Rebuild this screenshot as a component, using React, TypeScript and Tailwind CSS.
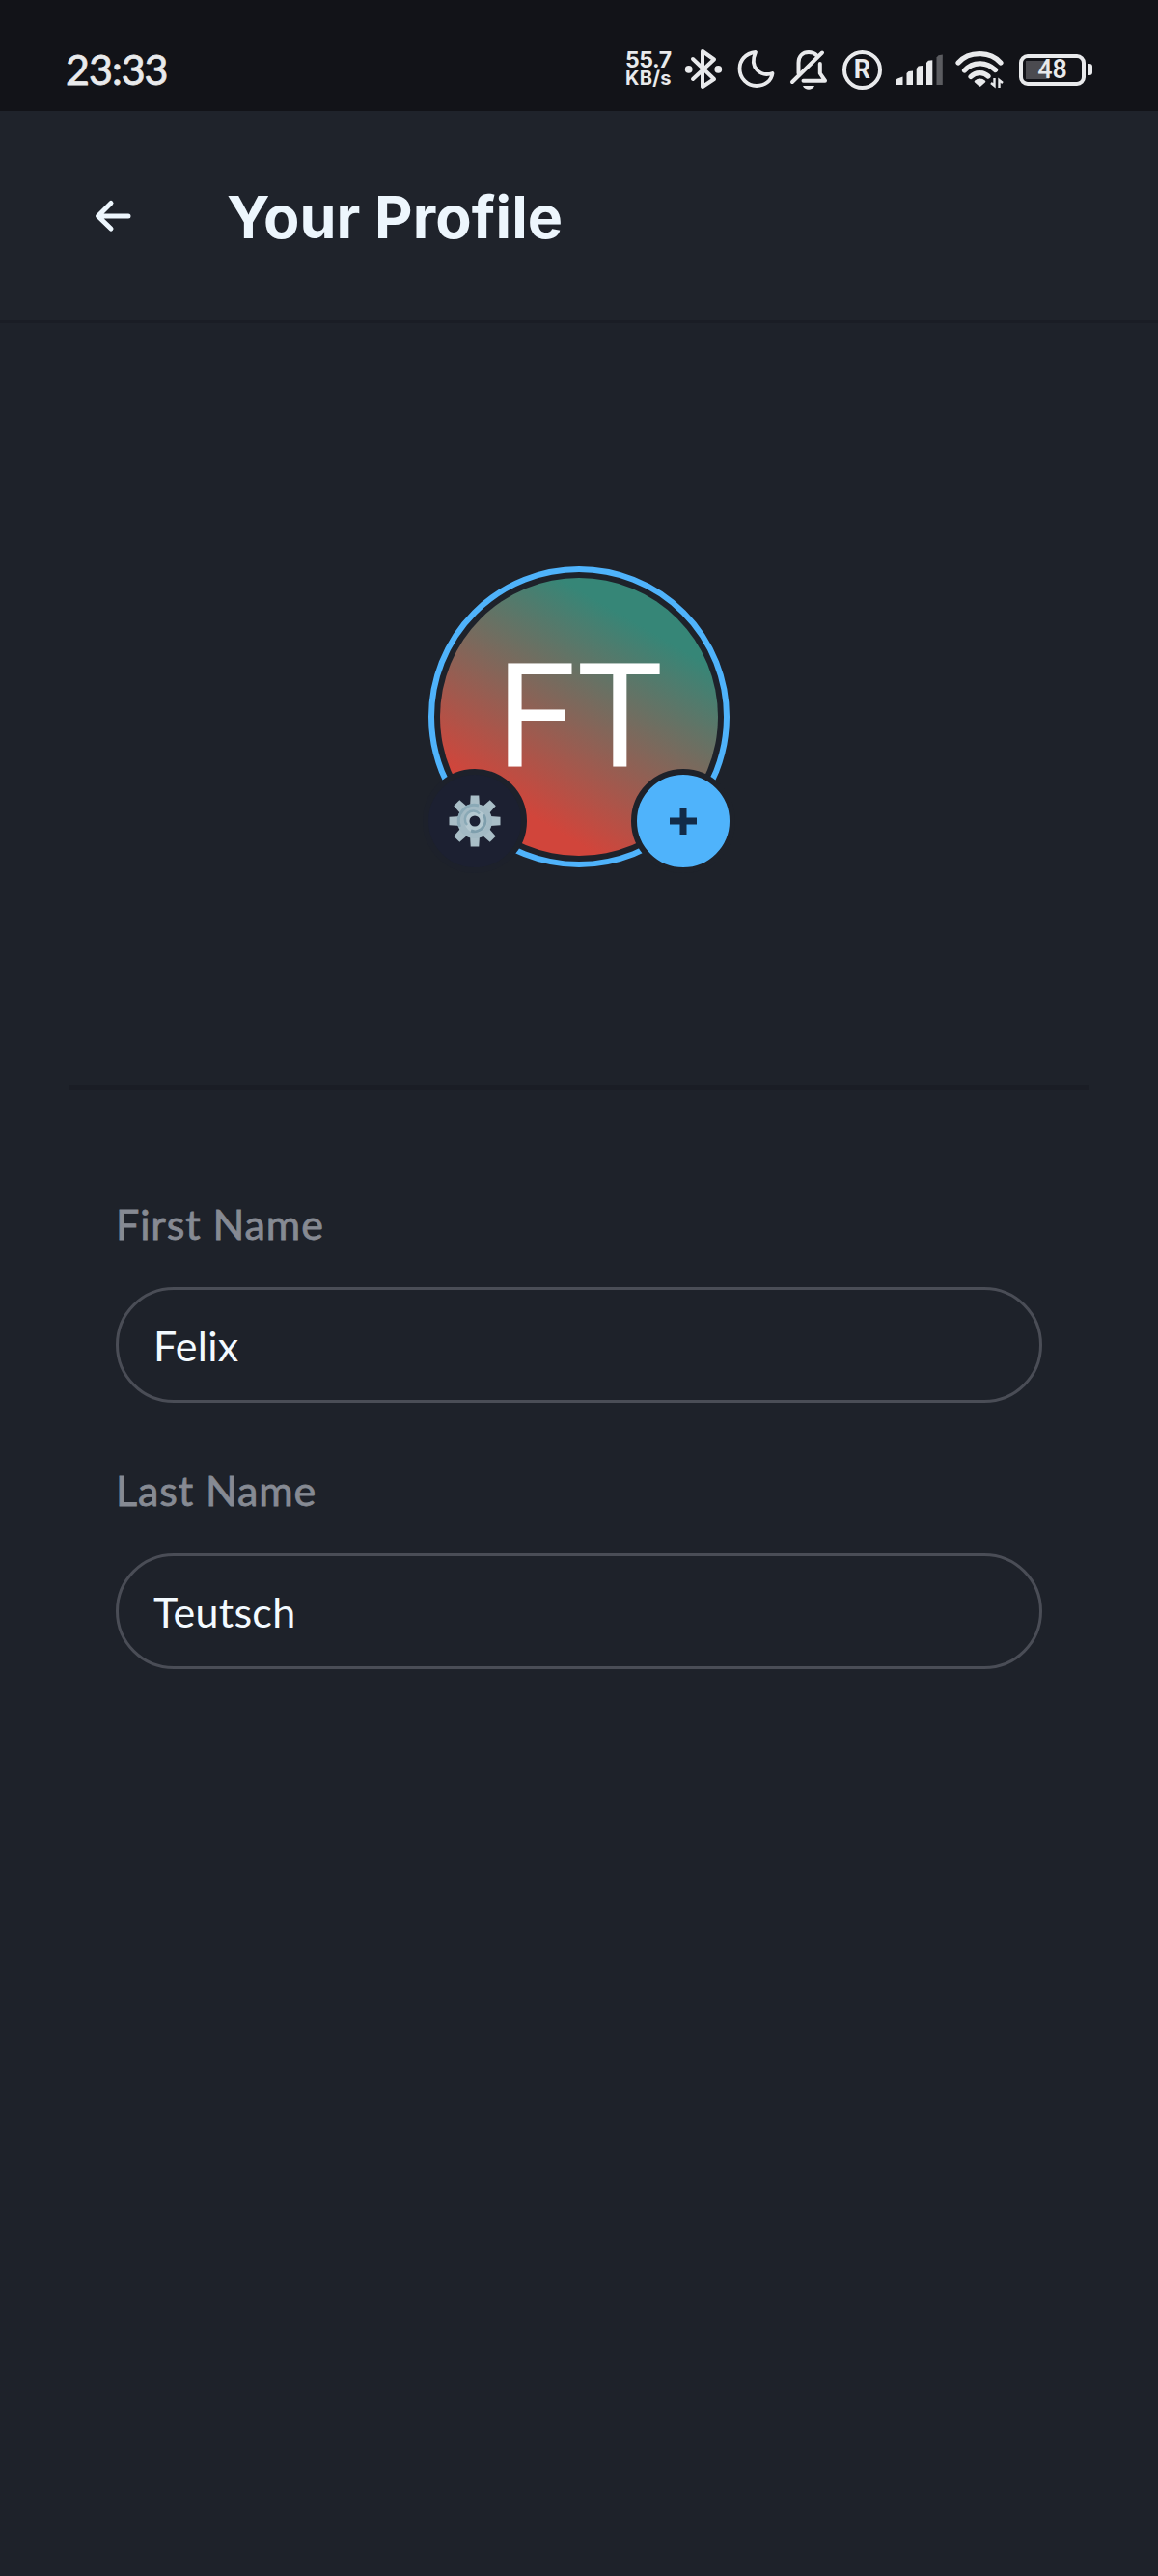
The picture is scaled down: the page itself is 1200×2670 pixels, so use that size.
import React from "react";

function StatusIcons() {
  return (
    <div className="flex h-12 items-center text-[#e9eaec]">
      <svg className="h-12 w-[50px]" viewBox="706 48 50 48" fill="none" stroke="currentColor" strokeWidth="4" strokeLinecap="round" strokeLinejoin="round">
        <path d="M718 61 L740 82 L728 90 V53 L740 61.5 L718 82" />
        <circle cx="713.7" cy="71.8" r="3.9" fill="currentColor" stroke="none" />
        <circle cx="744.3" cy="71.8" r="3.9" fill="currentColor" stroke="none" />
      </svg>
      <svg className="h-12 w-[54px]" viewBox="756 48 54 48" fill="none" stroke="currentColor" strokeWidth="3.8" strokeLinejoin="round">
        <path d="M783 54 C772 55 766.5 63 766.5 71 C766.5 81.500 774.5 89 784 89 C793 89 799.500 83.500 800.500 76 C788 80 776 70 783 54 Z" />
      </svg>
      <svg className="h-12 w-[56px]" viewBox="810 48 56 48" fill="none" stroke="currentColor" strokeWidth="4" strokeLinecap="round" strokeLinejoin="round">
        <path d="M821 85 L852 54.500" />
        <path d="M827.500 76 V65 C827.500 58 832 54 838 54 C841 54 844 55 846 57" />
        <path d="M832.500 83.700 H855 L849.800 76 V66" />
        <path d="M832 89 H844 C842 94 834 94 832 89 Z" fill="currentColor" stroke="none" />
      </svg>
      <div className="ml-[7px] flex h-[41px] w-[41px] items-center justify-center rounded-full border-4 border-[#e9eaec] pt-[1px] font-['Roboto'] text-[27px] leading-none font-bold">R</div>
      <svg className="ml-[6px] h-12 w-[66px]" viewBox="920 48 66 48" fill="currentColor">
        <path d="M928 88 V84.500 Q928 82.500 930 81.500 L935.500 79.500 V88 Z" />
        <path d="M939.500 88 V76 L941.500 74 L946 73.500 V88 Z" />
        <path d="M949.700 88 V71 L951.700 68.500 L956 68 V88 Z" />
        <path d="M960 88 V65 L962 62.800 L966.300 62.200 V88 Z" />
        <path d="M970.500 88 V59.500 L972.500 57.300 L976.800 56.500 V88 Z" fill="#5b5c60" />
      </svg>
      <svg className="h-12 w-[62px]" viewBox="986 48 62 48" fill="none" stroke="currentColor" strokeWidth="5.200" strokeLinecap="round">
        <path d="M993 65 C1004 52.500 1026 52.500 1037 65" />
        <path d="M999.500 73 C1008 63.500 1022 63.500 1031.500 72.500" />
        <path d="M1006 79.500 C1011 74.300 1019 74.300 1024 79" />
        <path d="M1011 84.500 Q1015.300 81 1020 84.500 L1015.500 88.500 Z" fill="currentColor" strokeWidth="2.500" strokeLinejoin="round" />
        <path d="M1030.500 81 V89 L1027 86 M1035.500 91 V83 L1039 86" strokeWidth="2.400" strokeLinecap="butt" />
      </svg>
      <div className="ml-2 flex h-[33px] w-[69px] items-center justify-center rounded-[9px] border-4 border-[#e9eaec] bg-[linear-gradient(90deg,transparent_3px,#4b4b50_3px,#4b4b50_27px,transparent_27px)] bg-[length:100%_19px] bg-center bg-no-repeat pt-[1px] font-['Roboto'] text-[27px] leading-none font-medium">48</div>
      <div className="ml-[2px] h-3 w-[5px] rounded-r-[3px] bg-[#e9eaec]" />
    </div>
  );
}

function GearIcon() {
  const teeth = [0, 45, 90, 135, 180, 225, 270, 315];
  return (
    <svg className="h-[54px] w-[54px]" viewBox="-27 -27 54 54">
      {teeth.map((angle) => (
        <path key={angle} d="M-4.300 -26.500 H4.300 L5 -14 H-5 Z" fill="#a9bec7" transform={`rotate(${angle})`} />
      ))}
      <circle r="18" fill="#a3bac4" />
      <path d="M-15.500 6 A16.500 16.500 0 0 1 4 -16" fill="none" stroke="#8aa9b6" strokeWidth="3" />
      <circle cx="1" cy="0.500" r="11.500" fill="#b4c8d0" />
      <path d="M9 -6.500 A11 11 0 0 1 -4 10" fill="none" stroke="#7f9fad" strokeWidth="3" />
      <path d="M-8 4 A8.500 8.500 0 0 1 5 -7.500" fill="none" stroke="#8aa9b6" strokeWidth="2.500" />
      <circle r="5.500" fill="#1d2134" />
    </svg>
  );
}

function Field({ label, value }: { label: string; value: string }) {
  return (
    <label className="flex h-[276px] flex-col">
      <span className="h-[96px] font-['Lato'] text-[43px] leading-[62px] tracking-[0.9px] text-[#868a93] [-webkit-text-stroke:0.8px_#868a93]">{label}</span>
      <input
        readOnly
        value={value}
        className="h-[120px] w-full rounded-full border-[3px] border-[#4a4d56] bg-transparent px-[36px] font-['Lato'] text-[43px] tracking-[0.3px] text-[#f3faff] outline-none"
      />
    </label>
  );
}

export default function App() {
  return (
    <main className="flex h-[2670px] w-[1200px] flex-col bg-[#1e222a]">
      <div className="flex h-[115px] items-start justify-between bg-[#121318] pt-12 pr-[68px] pl-[68px]">
        <time className="font-['Lato'] text-[43px] leading-[48px] tracking-[-1px] text-[#e9eaec] [-webkit-text-stroke:0.8px_#e9eaec]">23:33</time>
        <div className="flex">
          <div className="flex w-[58px] flex-col pt-[4px] font-['Inter'] font-bold text-[#e9eaec]">
            <span className="h-5 text-[23px] leading-[20px] tracking-[-0.4px]">55.7</span>
            <span className="h-[18px] text-[20px] leading-[18px] tracking-[0.3px]">KB/s</span>
          </div>
          <StatusIcons />
        </div>
      </div>

      <header className="flex h-[220px] items-start border-b-[3px] border-[#1a1d25] bg-[#1f232b] pl-[96px]">
        <svg className="mt-[91px] h-9 w-[43px]" viewBox="0 0 43 36" fill="none" stroke="#edf6fd" strokeWidth="5" strokeLinecap="round" strokeLinejoin="round">
          <path d="M37 18 H6 M19 4.500 L5.500 18 L19 31" />
        </svg>
        <h1 className="mt-[70px] ml-[96px] font-['Inter'] text-[61px] leading-[80px] font-bold tracking-[0.1px] text-[#edf6fd]">Your Profile</h1>
      </header>

      <section className="mx-[72px] flex h-[795px] justify-center border-b-[5px] border-[#1a1d25] pt-[252px]">
        <div className="relative h-[312px] w-[312px] rounded-full border-[6px] border-[#4fb3fb] p-[6px]">
          <div className="flex h-full w-full items-center justify-center rounded-full bg-[linear-gradient(30deg,#d1453b_21%,#368677_79%)]">
            <span className="font-['Roboto'] text-[150px] leading-none tracking-[-1px] text-white">FT</span>
          </div>
          <button className="absolute -bottom-[12px] -left-[12px] flex h-[108px] w-[108px] items-center justify-center rounded-full border-[6px] border-[#1d212b] bg-[#1c2031]">
            <GearIcon />
          </button>
          <button className="absolute -right-[12px] -bottom-[12px] flex h-[108px] w-[108px] items-center justify-center rounded-full border-[6px] border-[#1e222a] bg-[#4fb3fb]">
            <svg className="h-7 w-7" viewBox="0 0 28 28" stroke="#122b48" strokeWidth="7">
              <path d="M0 14 H28 M14 0 V28" />
            </svg>
          </button>
        </div>
      </section>

      <form className="flex flex-col px-[120px] pt-[108px]">
        <Field label="First Name" value="Felix" />
        <Field label="Last Name" value="Teutsch" />
      </form>
    </main>
  );
}
